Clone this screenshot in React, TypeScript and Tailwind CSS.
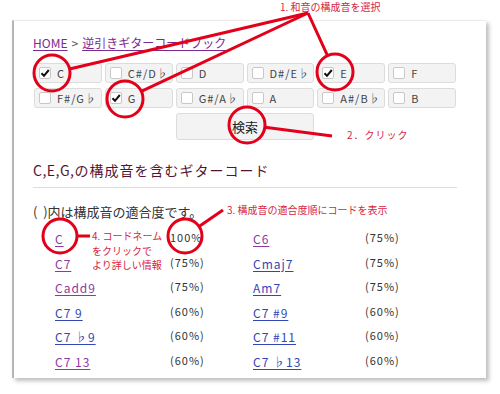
import React from "react";

type Note = { label: string; checked?: boolean };

const notes: Note[] = [
  { label: "C", checked: true },
  { label: "C#/D♭" },
  { label: "D" },
  { label: "D#/E♭" },
  { label: "E", checked: true },
  { label: "F" },
  { label: "F#/G♭" },
  { label: "G", checked: true },
  { label: "G#/A♭" },
  { label: "A" },
  { label: "A#/B♭" },
  { label: "B" },
];

type Chord = { name: string; pct: string; visited?: boolean };

const rows: [Chord, Chord][] = [
  [
    { name: "C", pct: "100%", visited: true },
    { name: "C6", pct: "(75%)", visited: true },
  ],
  [
    { name: "C7", pct: "(75%)", visited: true },
    { name: "Cmaj7", pct: "(75%)" },
  ],
  [
    { name: "Cadd9", pct: "(75%)", visited: true },
    { name: "Am7", pct: "(75%)" },
  ],
  [
    { name: "C7 9", pct: "(60%)" },
    { name: "C7 #9", pct: "(60%)" },
  ],
  [
    { name: "C7 ♭9", pct: "(60%)" },
    { name: "C7 #11", pct: "(60%)" },
  ],
  [
    { name: "C7 13", pct: "(60%)", visited: true },
    { name: "C7 ♭13", pct: "(60%)" },
  ],
];

const Check = () => (
  <svg width="10" height="10" viewBox="0 0 10 10">
    <path d="M1.5 5.2 L4 7.8 L8.8 2" fill="none" stroke="#111" strokeWidth="2" />
  </svg>
);

const NoteBox = ({ note }: { note: Note }) => (
  <div className="flex items-center h-[20px] bg-[#f3f3f3] border border-[#dcdcdc] rounded-[3px] pl-[4px]">
    <span className="flex items-center justify-center w-[12px] h-[12px] bg-white border border-[#c8c8c8] rounded-[2px]">
      {note.checked && <Check />}
    </span>
    <span className="ml-[6px] text-[11px] leading-none tracking-[1px] text-[#444]">
      {note.label}
    </span>
  </div>
);

const ChordLink = ({ chord, width }: { chord: Chord; width: string }) => (
  <span className={width}>
    <span
      className={`whitespace-pre text-[12px] tracking-[1px] underline underline-offset-2 ${
        chord.visited ? "text-[#8b3aa0]" : "text-[#3246b4]"
      }`}
    >
      {chord.name}
    </span>
  </span>
);

const Annotations = () => (
  <svg
    className="absolute inset-0 pointer-events-none"
    width="500"
    height="394"
    viewBox="0 0 500 394"
  >
    <g fill="none" stroke="#e2001a" strokeWidth="3">
      <circle cx="52" cy="73" r="18" />
      <circle cx="125" cy="99" r="18" />
      <circle cx="335" cy="72" r="18" />
      <circle cx="247" cy="125" r="18" />
      <circle cx="60" cy="236" r="17" />
      <circle cx="185" cy="236" r="17" />
      <line x1="69.5" y1="69" x2="308" y2="13" />
      <line x1="141.3" y1="91.3" x2="308" y2="13" />
      <line x1="327.5" y1="55.7" x2="308" y2="13" />
      <line x1="265" y1="127.3" x2="332" y2="136" />
      <line x1="199" y1="226.4" x2="223" y2="210" />
      <line x1="77" y1="236" x2="90" y2="236" />
    </g>
  </svg>
);

const App = () => {
  return (
    <div className="relative w-[500px] h-[394px] bg-white overflow-hidden font-['Noto_Sans_CJK_JP',sans-serif] text-[#333]">
      <div className="ml-[12px] mt-[20px] w-[474px] h-[358px] bg-white border-l-2 border-l-[#b5b5b5] border-t border-t-[#ececec] shadow-[3px_3px_4px_rgba(0,0,0,0.25)] pl-[19px] pt-[14px]">
        <div className="h-[16px] text-[12px] leading-[16px] flex items-center">
          <span className="text-[#7b2a8f] underline underline-offset-2">HOME</span>
          <span className="mx-[4px] text-[#555]">&gt;</span>
          <span className="text-[#7b2a8f] underline underline-offset-2">
            逆引きギターコードブック
          </span>
        </div>

        <div className="mt-[12px] ml-[1px] w-[422px] grid grid-cols-6 gap-x-[3px] gap-y-[5px]">
          {notes.map((note) => (
            <NoteBox key={note.label} note={note} />
          ))}
          <div className="col-start-3 col-span-2 h-[27px] flex items-center justify-center bg-[#f3f3f3] border border-[#dcdcdc] rounded-[3px] text-[13px] text-[#222]">
            検索
          </div>
        </div>

        <h2 className="mt-[20px] h-[20px] text-[14px] leading-[20px] text-[#561434]">
          <span className="tracking-[0.5px]">C,E,G,</span>
          <span className="tracking-[1px]">の構成音を含むギターコード</span>
        </h2>
        <div className="mt-[7px] w-[424px] border-t border-[#dddddd]" />

        <p className="mt-[15px] h-[18px] text-[13px] leading-[18px] text-[#333]">
          (&nbsp;&nbsp;)内は構成音の適合度です。
        </p>

        <div className="mt-[4px]">
          {rows.map(([left, right]) => (
            <div key={left.name} className="flex items-center h-[24.5px] pl-[22px]">
              <ChordLink chord={left} width="w-[115px]" />
              <span className="w-[83px] text-[11px] tracking-[1px] text-[#333]">{left.pct}</span>
              <ChordLink chord={right} width="w-[112px]" />
              <span className="text-[11px] tracking-[1px] text-[#333]">{right.pct}</span>
            </div>
          ))}
        </div>
      </div>

      <Annotations />

      <div className="absolute left-[280px] top-[0px] text-[10px] leading-[14px] text-[#d8243f] whitespace-nowrap">
        1. 和音の構成音を選択
      </div>
      <div className="absolute left-[347px] top-[128px] text-[10px] leading-[14px] tracking-[1px] text-[#d8243f] whitespace-nowrap">
        2．クリック
      </div>
      <div className="absolute left-[227px] top-[203px] text-[10px] leading-[14px] text-[#d8243f] whitespace-nowrap">
        3. 構成音の適合度順にコードを表示
      </div>
      <div className="absolute left-[92px] top-[229px] text-[10px] leading-[14.5px] text-[#d8243f] whitespace-nowrap">
        <div>4. コードネーム</div>
        <div>をクリックで</div>
        <div>より詳しい情報</div>
      </div>
    </div>
  );
};

export default App;
